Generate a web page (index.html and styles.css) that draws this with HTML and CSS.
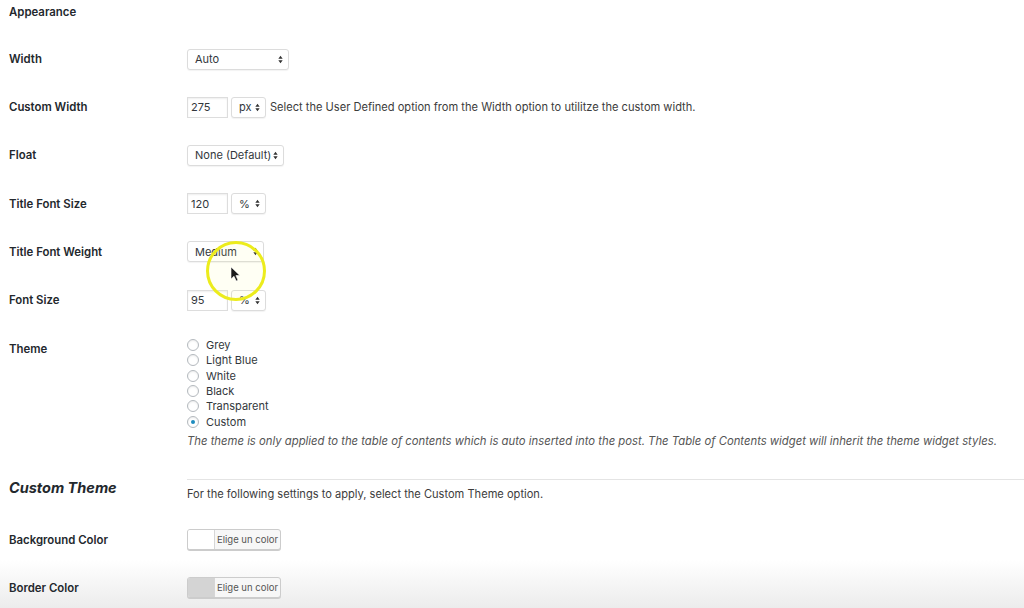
FILE: index.html
```html
<!DOCTYPE html>
<html>
<head>
<meta charset="utf-8">
<link rel="stylesheet" href="styles.css">
</head>
<body>
<div class="page">
  <div class="section-title">Appearance</div>

  <div class="row">
    <div class="label">Width</div>
    <div class="control">
      <div class="select w-auto"><span>Auto</span><svg class="arr" viewBox="0 0 6 10"><path d="M3 0.5 L5.6 4 L0.4 4 Z M3 9.5 L5.6 6 L0.4 6 Z"/></svg></div>
    </div>
  </div>

  <div class="row">
    <div class="label">Custom Width</div>
    <div class="control">
      <input class="num" type="text" value="275">
      <div class="select unit"><span>px</span><svg class="arr" viewBox="0 0 6 10"><path d="M3 0.5 L5.6 4 L0.4 4 Z M3 9.5 L5.6 6 L0.4 6 Z"/></svg></div>
      <span class="note">Select the User Defined option from the Width option to utilitze the custom width.</span>
    </div>
  </div>

  <div class="row">
    <div class="label">Float</div>
    <div class="control">
      <div class="select w-float"><span>None (Default)</span><svg class="arr" viewBox="0 0 6 10"><path d="M3 0.5 L5.6 4 L0.4 4 Z M3 9.5 L5.6 6 L0.4 6 Z"/></svg></div>
    </div>
  </div>

  <div class="row">
    <div class="label">Title Font Size</div>
    <div class="control">
      <input class="num" type="text" value="120">
      <div class="select unit"><span>%</span><svg class="arr" viewBox="0 0 6 10"><path d="M3 0.5 L5.6 4 L0.4 4 Z M3 9.5 L5.6 6 L0.4 6 Z"/></svg></div>
    </div>
  </div>

  <div class="row">
    <div class="label">Title Font Weight</div>
    <div class="control">
      <div class="select w-medium"><span>Medium</span><svg class="arr" viewBox="0 0 6 10"><path d="M3 0.5 L5.6 4 L0.4 4 Z M3 9.5 L5.6 6 L0.4 6 Z"/></svg></div>
    </div>
  </div>

  <div class="row">
    <div class="label">Font Size</div>
    <div class="control">
      <input class="num" type="text" value="95">
      <div class="select unit"><span>%</span><svg class="arr" viewBox="0 0 6 10"><path d="M3 0.5 L5.6 4 L0.4 4 Z M3 9.5 L5.6 6 L0.4 6 Z"/></svg></div>
    </div>
  </div>

  <div class="row row-top theme-row">
    <div class="label theme-label">Theme</div>
    <div class="control-col">
      <label class="radio"><input type="radio" name="theme"><span>Grey</span></label>
      <label class="radio"><input type="radio" name="theme"><span>Light Blue</span></label>
      <label class="radio"><input type="radio" name="theme"><span>White</span></label>
      <label class="radio"><input type="radio" name="theme"><span>Black</span></label>
      <label class="radio"><input type="radio" name="theme"><span>Transparent</span></label>
      <label class="radio"><input type="radio" name="theme" checked><span>Custom</span></label>
      <p class="desc">The theme is only applied to the table of contents which is auto inserted into the post. The Table of Contents widget will inherit the theme widget styles.</p>
    </div>
  </div>

  <div class="row row-top custom-row">
    <div class="label heading">Custom Theme</div>
    <div class="control-col custom-col">
      <div class="rule"></div>
      <p class="plain">For the following settings to apply, select the Custom Theme option.</p>
    </div>
  </div>

  <div class="row">
    <div class="label">Background Color</div>
    <div class="control">
      <div class="color-btn"><span class="swatch"></span><span class="btn-text">Elige un color</span></div>
    </div>
  </div>

  <div class="row">
    <div class="label">Border Color</div>
    <div class="control">
      <div class="color-btn"><span class="swatch swatch-grey"></span><span class="btn-text">Elige un color</span></div>
    </div>
  </div>
</div>

<svg class="cursor-ring" width="70" height="70" viewBox="0 0 70 70">
  <circle cx="35" cy="35" r="28.5" fill="rgba(250,250,120,0.08)" stroke="#ecec1c" stroke-width="3"/>
  <path d="M30 31 L30 43 L33 40.3 L35.2 45 L37 44.2 L34.9 39.6 L38.8 39.4 Z" fill="#1a1a1a" stroke="#fff" stroke-width="0.6"/>
</svg>
</body>
</html>
```

FILE: styles.css
```css
html, body {
  margin: 0;
  padding: 0;
}
body {
  width: 1024px;
  height: 608px;
  overflow: hidden;
  position: relative;
  font-family: Inter, "Liberation Sans", Arial, sans-serif;
  font-size: 11px;
  color: #23282d;
  background: linear-gradient(to bottom, #ffffff 0px, #ffffff 560px, #ececec 608px);
}
.page {
  padding-left: 9px;
}
.section-title {
  height: 24px;
  line-height: 24px;
  font-weight: 600;
  font-size: 11.4px;
  margin-bottom: 11px;
}
.row {
  display: flex;
  align-items: center;
  height: 48.2px;
}
.label {
  width: 178px;
  flex: none;
  font-weight: 600;
  font-size: 11.4px;
}
.control {
  display: flex;
  align-items: center;
  gap: 3px;
}
.select {
  height: 21px;
  box-sizing: border-box;
  border: 1px solid #dcdcdc;
  border-radius: 3px;
  background: #fff;
  box-shadow: 0 1px 1px rgba(0,0,0,0.05);
  display: flex;
  align-items: center;
  justify-content: space-between;
  padding: 0 5px 0 7px;
  font-size: 11px;
  color: #32373c;
}
.arr {
  width: 5px;
  height: 9px;
  fill: #333;
}
.w-auto { width: 102px; }
.w-float { width: 97px; }
.w-medium { width: 77px; }
.unit { width: 35px; }
.num {
  width: 41px;
  height: 21px;
  box-sizing: border-box;
  border: 1px solid #dddddd;
  box-shadow: inset 0 1px 2px rgba(0,0,0,0.07);
  padding: 0 3px;
  font-family: inherit;
  font-size: 11px;
  color: #32373c;
  margin: 0;
  outline: none;
}
.note {
  margin-left: 1px;
  font-size: 11.1px;
  color: #3c3c3c;
}
.row-top {
  align-items: flex-start;
  height: auto;
}
.theme-row {
  padding-top: 13px;
}
.theme-label {
  padding-top: 5px;
}
.control-col {
  display: flex;
  flex-direction: column;
}
.radio {
  display: flex;
  align-items: center;
  height: 15.4px;
  font-size: 11px;
  color: #32373c;
}
.radio input {
  -webkit-appearance: none;
  appearance: none;
  width: 12px;
  height: 12px;
  margin: 0 7px 0 0;
  border: 1px solid #b4b9be;
  border-radius: 50%;
  box-sizing: border-box;
  background: #fff;
  box-shadow: inset 0 1px 2px rgba(0,0,0,0.08);
  position: relative;
}
.radio input:checked::after {
  content: "";
  position: absolute;
  left: 3px;
  top: 3px;
  width: 4px;
  height: 4px;
  border-radius: 50%;
  background: #1e8cbe;
}
.desc {
  margin: 5px 0 0 0;
  font-style: italic;
  font-size: 11.3px;
  color: #555;
  white-space: nowrap;
}
.custom-row {
  padding-top: 31px;
}
.heading {
  font-size: 14.5px;
  font-weight: 700;
  font-style: italic;
  padding-top: 0;
}
.custom-col {
  flex: 1;
}
.rule {
  height: 1px;
  background: #e4e4e4;
}
.plain {
  margin: 7px 0 0 0;
  font-size: 11.1px;
  color: #3c3c3c;
}
.custom-row + .row {
  margin-top: 14px;
}
.color-btn {
  display: flex;
  height: 21px;
  width: 94px;
  box-sizing: border-box;
  border: 1px solid #cccccc;
  border-radius: 3px;
  box-shadow: 0 1px 0 #cccccc;
  overflow: hidden;
  background: #f7f7f7;
}
.swatch {
  width: 26px;
  background: #ffffff;
  border-right: 1px solid #d6d6d6;
}
.swatch-grey {
  background: #d4d4d4;
}
.btn-text {
  flex: 1;
  display: flex;
  align-items: center;
  justify-content: center;
  font-size: 9.5px;
  color: #555;
}
.cursor-ring {
  position: absolute;
  left: 201px;
  top: 236px;
}
```
